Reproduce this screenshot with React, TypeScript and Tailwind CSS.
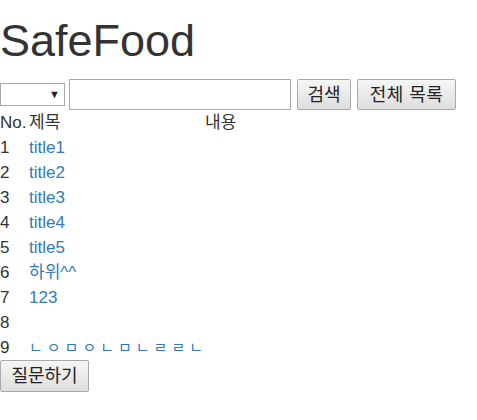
import React from 'react';

const rows = [
  { no: 1, title: 'title1' },
  { no: 2, title: 'title2' },
  { no: 3, title: 'title3' },
  { no: 4, title: 'title4' },
  { no: 5, title: 'title5' },
  { no: 6, title: '하위^^' },
  { no: 7, title: '123' },
  { no: 8, title: '' },
];

const btn =
  'h-[31px] px-[6px] border border-[#a9a9a9] rounded-[2px] bg-gradient-to-b from-[#f6f6f6] to-[#dedede] text-[18px] text-[#222] leading-none';

const App = () => {
  return (
    <div className="min-h-[420px] bg-white text-[#333] font-['Liberation_Sans','Noto_Sans_CJK_KR',sans-serif]">
      <h1 className="pt-[17px] text-[45px] leading-[48px] text-[#333]">SafeFood</h1>

      <div className="mt-[14px] flex items-center h-[31px]">
        <div className="relative w-[65px] h-[23px] border border-[#a9a9a9] bg-white">
          <span className="absolute right-[4px] top-[5px] text-[11px] leading-none text-[#222]">▼</span>
        </div>
        <div className="ml-[4px] w-[222px] h-[31px] border border-[#a9a9a9] bg-white" />
        <button className={`ml-[6px] w-[54px] ${btn}`}>검색</button>
        <button className={`ml-[6px] w-[99px] ${btn} tracking-[0.5px]`}>전체 목록</button>
      </div>

      <table className="table-fixed w-[245px] text-[17px] leading-[25px] border-collapse">
        <thead>
          <tr>
            <th className="w-[29px] p-0 text-left font-normal">No.</th>
            <th className="w-[176px] p-0 text-left font-normal">제목</th>
            <th className="w-[40px] p-0 text-left font-normal">내용</th>
          </tr>
        </thead>
        <tbody>
          {rows.map((r) => (
            <tr key={r.no} className="h-[25px]">
              <td className="p-0">{r.no}</td>
              <td className="p-0 text-[#337ab7]">{r.title}</td>
              <td className="p-0" />
            </tr>
          ))}
          <tr className="h-[25px]">
            <td className="p-0">9</td>
            <td className="p-0 text-[#337ab7] text-[15px] tracking-[4px] align-bottom pb-[5px] leading-none whitespace-nowrap">
              ㄴㅇㅁㅇㄴㅁㄴㄹㄹㄴ
            </td>
            <td className="p-0" />
          </tr>
        </tbody>
      </table>

      <button className={`w-[89px] h-[32px] ${btn}`}>질문하기</button>
    </div>
  );
};

export default App;
